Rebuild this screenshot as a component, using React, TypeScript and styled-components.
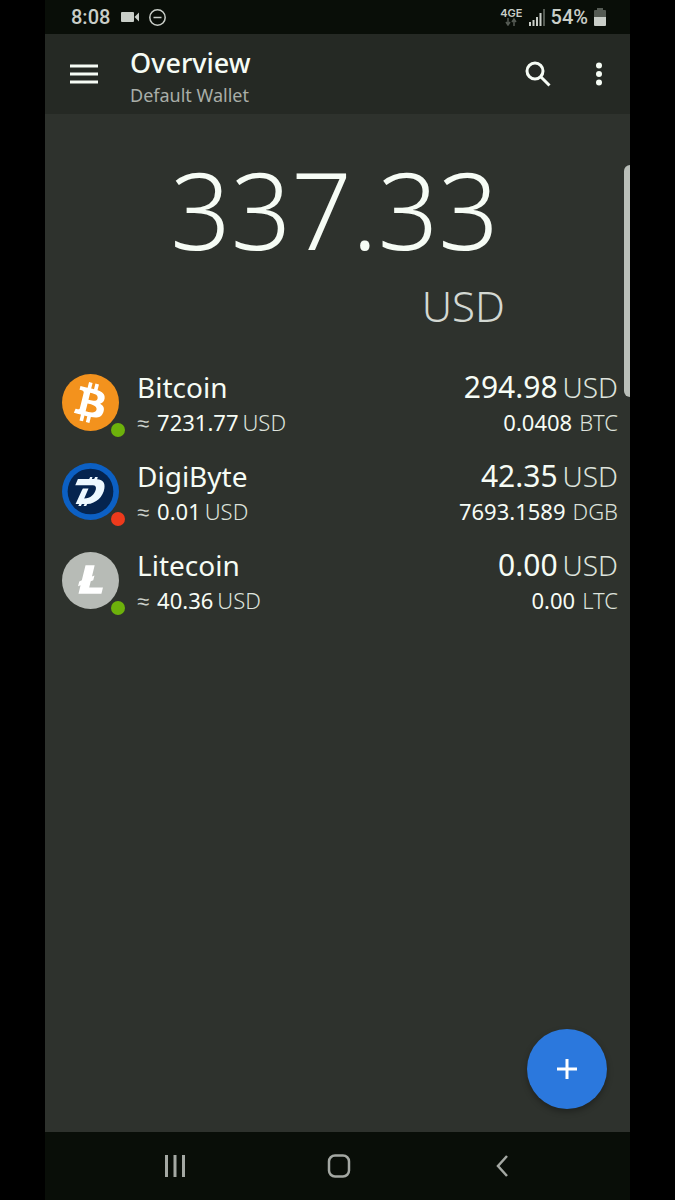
import React from "react";
import styled, { createGlobalStyle } from "styled-components";

const GlobalStyle = createGlobalStyle`
  *, *::before, *::after { box-sizing: border-box; }
  body {
    margin: 0;
    background: #000;
    color: #f6fcf5;
    font-family: "Noto Sans", sans-serif;
  }
  button { font: inherit; color: inherit; }
`;

const Screen = styled.div`
  display: flex;
  flex-direction: column;
  min-height: 100vh;
  margin: 0 45px;
  background: #2e322d;
`;

const StatusBar = styled.div`
  display: flex;
  align-items: center;
  justify-content: space-between;
  height: 34px;
  padding: 0 24px 0 26px;
  background: #090e08;
  color: #c9cec8;
  font-family: Roboto, sans-serif;
  font-size: 20px;
  line-height: 24px;
  font-weight: 500;
`;

const StatusGroup = styled.div<{ $gap: number }>`
  display: flex;
  align-items: center;
  gap: ${(p) => p.$gap}px;
`;

const Network = styled.span`
  display: flex;
  flex-direction: column;
  align-items: center;
  font-family: Inter, sans-serif;
  font-size: 11px;
  line-height: 9px;
  font-weight: 600;
`;

const AppBar = styled.header`
  display: flex;
  align-items: center;
  height: 80px;
  padding: 0 15px 0 23px;
  background: #252924;
`;

const IconButton = styled.button`
  display: flex;
  align-items: center;
  justify-content: center;
  width: 32px;
  height: 48px;
  padding: 0;
  border: 0;
  background: none;
`;

const Titles = styled.div`
  flex: 1;
  padding: 6px 0 0 30px;
`;

const Title = styled.h1`
  margin: 0;
  font-size: 27px;
  line-height: 36px;
  font-weight: 500;
`;

const Subtitle = styled.p`
  margin: 0;
  color: #a9aea8;
  font-size: 18px;
  line-height: 28px;
`;

const Actions = styled.div`
  display: flex;
  gap: 29px;
`;

const Main = styled.main`
  position: relative;
  display: flex;
  flex: 1;
  flex-direction: column;
`;

const Balance = styled.section`
  display: flex;
  flex-direction: column;
  align-self: center;
  padding-top: 32px;
`;

const BalanceAmount = styled.span`
  padding-right: 6px;
  font-size: 106px;
  line-height: 126px;
  font-weight: 300;
`;

const BalanceCurrency = styled.span`
  align-self: flex-end;
  color: #d3d8d2;
  font-size: 42px;
  line-height: 68px;
  font-weight: 300;
`;

const ScrollThumb = styled.div`
  position: absolute;
  top: 51px;
  right: 0;
  width: 6px;
  height: 232px;
  border-radius: 6px 0 0 6px;
  background: #b9beb8;
`;

const Assets = styled.ul`
  margin: 0;
  padding: 18px 12px 0 17px;
  list-style: none;
`;

const Asset = styled.li`
  display: flex;
  align-items: center;
  height: 89px;
`;

const Coin = styled.div`
  position: relative;
  width: 57px;
  height: 57px;
  svg { display: block; }
`;

const StatusDot = styled.span<{ $online: boolean }>`
  position: absolute;
  right: -6px;
  bottom: -6px;
  width: 14px;
  height: 14px;
  border-radius: 50%;
  background: ${(p) => (p.$online ? "#6db10b" : "#ee3a1c")};
`;

const Column = styled.div<{ $end?: boolean }>`
  display: flex;
  flex: ${(p) => (p.$end ? "none" : "1")};
  flex-direction: column;
  align-items: ${(p) => (p.$end ? "flex-end" : "flex-start")};
  padding-left: ${(p) => (p.$end ? 0 : 18)}px;
  white-space: nowrap;
`;

const Primary = styled.span`
  display: flex;
  align-items: baseline;
  gap: 5px;
  font-size: 28px;
  line-height: 38px;
`;

const Value = styled.span`
  font-size: 30px;
`;

const Secondary = styled.span<{ $gap: number }>`
  display: flex;
  align-items: baseline;
  gap: ${(p) => p.$gap}px;
  font-size: 22px;
  line-height: 32px;
`;

const Approx = styled.span`
  margin-right: 4px;
  color: #cbd0ca;
  font-weight: 300;
`;

const Unit = styled.span`
  color: #dde2dc;
  font-weight: 300;
`;

const Fab = styled.button`
  position: absolute;
  right: 23px;
  bottom: 23px;
  display: flex;
  align-items: center;
  justify-content: center;
  width: 80px;
  height: 80px;
  padding: 0;
  border: 0;
  border-radius: 50%;
  background: #2b78dd;
  box-shadow: 0 3px 6px rgba(0, 0, 0, 0.3);
`;

const NavBar = styled.nav`
  display: flex;
  align-items: center;
  justify-content: space-between;
  height: 68px;
  padding: 0 112px 0 114px;
  background: #090e08;
  color: #a4a8a3;
`;

const BitcoinLogo = () => (
  <svg width="57" height="57" viewBox="0 0 32 32" aria-hidden="true">
    <circle cx="16" cy="16" r="16" fill="#f3921d" />
    <path
      fill="#fff"
      transform="translate(16 16) scale(1.15) translate(-16.300 -16)"
      d="M23.189 14.02c.314-2.096-1.283-3.223-3.465-3.975l.708-2.84-1.728-.43-.69 2.765c-.454-.114-.92-.22-1.385-.326l.695-2.783L15.596 6l-.708 2.839c-.376-.086-.746-.17-1.104-.26l.002-.009-2.384-.595-.46 1.846s1.283.294 1.256.312c.7.175.826.638.805 1.006l-.806 3.235c.048.012.11.03.18.057l-.183-.045-1.13 4.532c-.086.212-.303.531-.793.41.018.025-1.256-.313-1.256-.313l-.858 1.978 2.25.561c.418.105.828.215 1.231.318l-.715 2.872 1.727.43.708-2.84c.472.127.93.245 1.378.357l-.706 2.828 1.728.43.715-2.866c2.948.558 5.164.333 6.097-2.333.752-2.146-.037-3.385-1.588-4.192 1.13-.26 1.98-1.003 2.207-2.538zm-3.95 5.538c-.533 2.147-4.148.986-5.32.695l.95-3.805c1.172.293 4.929.872 4.37 3.11zm.535-5.569c-.487 1.953-3.495.96-4.47.717l.86-3.45c.975.243 4.118.696 3.61 2.733z"
    />
  </svg>
);

const DigiByteLogo = () => (
  <svg width="57" height="57" viewBox="0 0 172 172" aria-hidden="true">
    <circle cx="86" cy="86" r="86" fill="#0c60c4" />
    <circle cx="86" cy="86" r="69" fill="#05244f" />
    <path
      fill="#edf8ff"
      fillRule="evenodd"
      d="M48 48H82L85 42H92L90 48H97L100 42H108L106 49C122 50 131 60 128 76C124 102 103 122 76 124L73 130H65L68 124H60L57 130H49L52 124H41L60 82L63 77H80L67 107C86 107 98 95 102 80C104 72 101 67 93 67H40Z"
    />
  </svg>
);

const LitecoinLogo = () => (
  <svg width="57" height="57" viewBox="0 0 32 32" aria-hidden="true">
    <circle cx="16" cy="16" r="16" fill="#b7bbb6" />
    <path
      fill="#fff"
      d="M10.427 18.714L9 19.268l.688-2.759 1.444-.58L13.213 7.500h5.129l-1.519 6.196 1.410-.571-.68 2.750-1.427.571-.848 3.483H23L22.127 23.500H9.252z"
    />
  </svg>
);

const assets = [
  { name: "Bitcoin", code: "BTC", price: "7231.77", value: "294.98", amount: "0.0408", online: true, Logo: BitcoinLogo },
  { name: "DigiByte", code: "DGB", price: "0.01", value: "42.35", amount: "7693.1589", online: false, Logo: DigiByteLogo },
  { name: "Litecoin", code: "LTC", price: "40.36", value: "0.00", amount: "0.00", online: true, Logo: LitecoinLogo },
];

export default function App() {
  return (
    <>
      <GlobalStyle />
      <Screen>
        <StatusBar>
          <StatusGroup $gap={10}>
            <span>8:08</span>
            <svg width="19" height="12" viewBox="0 0 19 12" fill="currentColor" aria-hidden="true">
              <rect x="1" y="1" width="13" height="10" rx="1" />
              <path d="M14.500 6 19 1.500V10.500Z" />
            </svg>
            <svg width="17" height="17" viewBox="0 0 17 17" fill="none" stroke="currentColor" strokeWidth="1.5" aria-hidden="true">
              <circle cx="8.5" cy="8.5" r="7.7" />
              <path d="M4.5 8.5h8" />
            </svg>
          </StatusGroup>
          <StatusGroup $gap={6}>
            <Network>
              4GE
              <svg width="12" height="8" viewBox="0 0 12 8" fill="none" stroke="#555b54" strokeWidth="1.5" aria-hidden="true">
                <path d="M3 0v6M1 4l2 3 2-3M9 8V2M7 4l2-3 2 3" />
              </svg>
            </Network>
            <svg width="16" height="17" viewBox="0 0 16 17" fill="currentColor" aria-hidden="true">
              <path d="M0 13h2v4H0zM3.5 11h2v6h-2zM7 8h2v9H7zM10.500 4h2v13h-2z" />
              <path d="M14 0h2v17h-2z" fill="#555b54" />
            </svg>
            <span>54%</span>
            <svg width="12" height="18" viewBox="0 0 12 18" aria-hidden="true">
              <path d="M3 0h6v2h2q1 0 1 1v6H0V3q0-1 1-1h2z" fill="#555b54" />
              <path d="M0 9h12v8q0 1-1 1H1q-1 0-1-1z" fill="#c9cec8" />
            </svg>
          </StatusGroup>
        </StatusBar>

        <AppBar>
          <IconButton aria-label="Menu">
            <svg width="28" height="20" viewBox="0 0 28 20" fill="currentColor" aria-hidden="true">
              <path d="M0 .5h28v3H0zM0 8.500h28v3H0zM0 16.500h28v3H0z" />
            </svg>
          </IconButton>
          <Titles>
            <Title>Overview</Title>
            <Subtitle>Default Wallet</Subtitle>
          </Titles>
          <Actions>
            <IconButton aria-label="Search">
              <svg width="26" height="26" viewBox="0 0 26 26" fill="none" stroke="currentColor" strokeWidth="3" aria-hidden="true">
                <circle cx="10" cy="10" r="8" />
                <path d="m15.500 15.500 9 9" />
              </svg>
            </IconButton>
            <IconButton aria-label="More options">
              <svg width="6" height="24" viewBox="0 0 6 24" fill="currentColor" aria-hidden="true">
                <circle cx="3" cy="3.500" r="3" />
                <circle cx="3" cy="12" r="3" />
                <circle cx="3" cy="20.500" r="3" />
              </svg>
            </IconButton>
          </Actions>
        </AppBar>

        <Main>
          <Balance aria-label="Total balance">
            <BalanceAmount>337.33</BalanceAmount>
            <BalanceCurrency>USD</BalanceCurrency>
          </Balance>
          <Assets>
            {assets.map(({ name, code, price, value, amount, online, Logo }) => (
              <Asset key={code}>
                <Coin>
                  <Logo />
                  <StatusDot $online={online} />
                </Coin>
                <Column>
                  <Primary>{name}</Primary>
                  <Secondary $gap={4}>
                    <Approx>≈</Approx>
                    <span>{price}</span>
                    <Unit>USD</Unit>
                  </Secondary>
                </Column>
                <Column $end>
                  <Primary>
                    <Value>{value}</Value>
                    <Unit>USD</Unit>
                  </Primary>
                  <Secondary $gap={7}>
                    <span>{amount}</span>
                    <Unit>{code}</Unit>
                  </Secondary>
                </Column>
              </Asset>
            ))}
          </Assets>
          <ScrollThumb />
          <Fab aria-label="Add">
            <svg width="22" height="22" viewBox="0 0 22 22" stroke="#fff" strokeWidth="3" aria-hidden="true">
              <path d="M11 1v20M1 11h20" />
            </svg>
          </Fab>
        </Main>

        <NavBar aria-label="System">
          <IconButton aria-label="Recent apps">
            <svg width="20" height="22" viewBox="0 0 20 22" fill="currentColor" aria-hidden="true">
              <path d="M0 0h3v22H0zM8.500 0h3v22h-3zM17 0h3v22h-3z" />
            </svg>
          </IconButton>
          <IconButton aria-label="Home">
            <svg width="24" height="24" viewBox="0 0 24 24" fill="none" stroke="currentColor" strokeWidth="2.500" aria-hidden="true">
              <rect x="2" y="1.500" width="20" height="21" rx="6" />
            </svg>
          </IconButton>
          <IconButton aria-label="Back">
            <svg width="14" height="22" viewBox="0 0 14 22" fill="none" stroke="currentColor" strokeWidth="2.500" aria-hidden="true">
              <path d="M12 1 3 11l9 10" />
            </svg>
          </IconButton>
        </NavBar>
      </Screen>
    </>
  );
}
